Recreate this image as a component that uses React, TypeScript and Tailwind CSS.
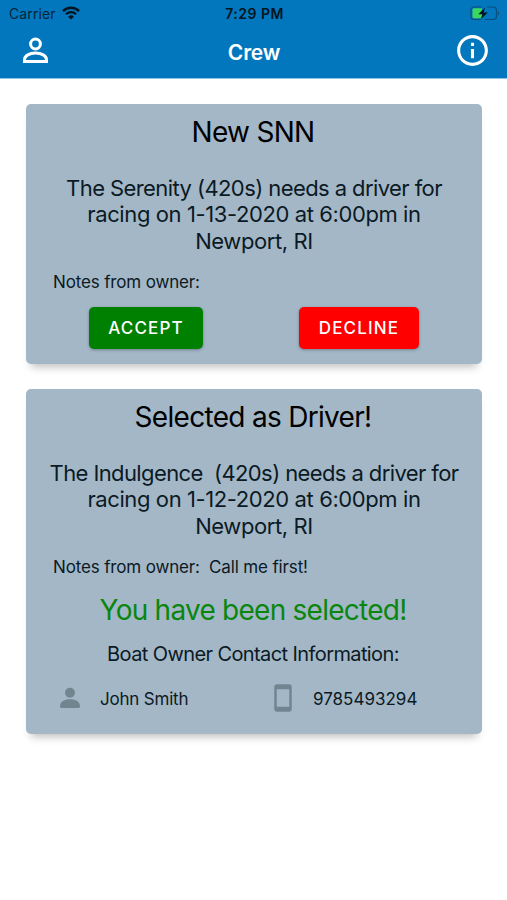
import type { ReactNode } from 'react';
import { MdInfoOutline, MdStayCurrentPortrait } from 'react-icons/md';

const StatusBar = () => {
  return (
    <div className="flex h-[27px] items-center text-[14px] leading-[17px] text-[#06243a]">
      <div className="flex flex-1 items-center gap-[6px] pl-[9px]">
        <span className="tracking-[0.1px]">Carrier</span>
        <svg className="mt-[-1px] h-[14px] w-[18px]" viewBox="0 0 18 14" fill="none">
          <path d="M1 5.1a11.4 11.4 0 0 1 16 0" stroke="#041420" strokeWidth="2.5" />
          <path d="M4 8.2a7.1 7.1 0 0 1 10 0" stroke="#041420" strokeWidth="2.3" />
          <path d="M9 13.6 6.1 10.7a4.1 4.1 0 0 1 5.8 0z" fill="#041420" />
        </svg>
      </div>
      <span className="font-semibold tracking-[0.5px] text-[#041420]">7:29 PM</span>
      <div className="flex flex-1 justify-end pr-[7px]">
        <svg className="mt-[-1px] h-[15px] w-[30px]" viewBox="0 0 30 15" fill="none">
          <path
            d="M12 1H4a3 3 0 0 0-3 3v6.500a3 3 0 0 0 3 3h6.500M17 1h6.500a3 3 0 0 1 3 3v6.500a3 3 0 0 1-3 3H15"
            stroke="#0a4c7c"
            strokeWidth="1.2"
          />
          <path d="M28 5.300c1.400.6 1.400 3.400 0 4z" fill="#0a4c7c" />
          <path d="M4 2.300h8v9.900H4A1.500 1.500 0 0 1 2.500 10.700V3.800A1.500 1.500 0 0 1 4 2.300z" fill="#3bd65f" />
          <path d="M15 1.600 8.300 8.200h4l-1.500 5 6.900-6.700h-4.100z" fill="#041420" />
        </svg>
      </div>
    </div>
  );
};

const PersonOutlineIcon = () => {
  return (
    <svg className="h-[37px] w-[37px]" viewBox="0 0 37 37" fill="none" stroke="currentColor" strokeWidth="3">
      <circle cx="18.500" cy="12" r="4.900" />
      <path d="M7.500 29.500v-1.800c0-4 5-6.700 11-6.700s11 2.700 11 6.700v1.800z" />
    </svg>
  );
};

const PersonIcon = () => {
  return (
    <svg className="h-[30px] w-[30px]" viewBox="0 0 30 30" fill="#718591">
      <circle cx="15" cy="9.700" r="5" />
      <path d="M5 22.800c0-4 4.300-6.600 10-6.600s10 2.600 10 6.600v.7c0 .8-.6 1.400-1.400 1.400H6.400c-.8 0-1.400-.6-1.400-1.400z" />
    </svg>
  );
};

const Header = () => {
  return (
    <header className="h-[79px] border-b border-[#8fc3e3] bg-[#0277bd]">
      <StatusBar />
      <div className="flex h-[47px] items-center justify-between pl-[17px] pr-[16px] text-white">
        <PersonOutlineIcon />
        <h1 className="mt-[4px] text-[21px] font-semibold tracking-[-0.2px]">Crew</h1>
        <MdInfoOutline size={37} />
      </div>
    </header>
  );
};

type CardProps = {
  title: string;
  height: string;
  lines: ReactNode;
  notes?: string;
  children: ReactNode;
};

const Card = ({ title, height, lines, notes, children }: CardProps) => {
  return (
    <section
      className={`flex flex-col rounded-[5px] bg-[#a3b7c7] text-[#0b1a24] shadow-[0_8px_8px_-5px_rgba(0,0,0,0.25)] ${height}`}
    >
      <h2 className="mt-[11px] pr-[2px] text-center text-[28px] leading-[34px] tracking-[-0.7px] text-black">
        {title}
      </h2>
      <div className="mt-[26px] text-center text-[22px] leading-[26.4px] tracking-[-0.4px]">
        {lines}
      </div>
      <p className="mt-[18px] whitespace-pre pl-[27px] text-[17px] leading-[20px] tracking-[-0.15px]">
        Notes from owner:{notes ? `  ${notes}` : ''}
      </p>
      {children}
    </section>
  );
};

export default function App() {
  return (
    <div className="min-h-[900px] bg-white font-['Inter',sans-serif]">
      <Header />
      <main className="flex flex-col gap-[25px] pl-[26px] pr-[25px] pt-[25px]">
        <Card
          title="New SNN"
          height="h-[260px]"
          lines={
            <>
              <p className="tracking-[-0.58px]">The Serenity (420s) needs a driver for</p>
              <p>racing on 1-13-2020 at 6:00pm in</p>
              <p>Newport, RI</p>
            </>
          }
        >
          <div className="mt-[15px] flex gap-[96px] pl-[63px] text-[17px] font-medium text-white">
            <button className="h-[42px] w-[114px] rounded-[5px] bg-[#008000] pt-[2px] tracking-[1.15px] shadow-[0_1px_3px_rgba(0,0,0,0.3)]">
              ACCEPT
            </button>
            <button className="h-[42px] w-[120px] rounded-[5px] bg-[#ff0000] pt-[2px] tracking-[1.15px] shadow-[0_1px_3px_rgba(0,0,0,0.3)]">
              DECLINE
            </button>
          </div>
        </Card>
        <Card
          title="Selected as Driver!"
          height="h-[345px]"
          notes="Call me first!"
          lines={
            <>
              <p className="whitespace-pre tracking-[-0.6px]">
                {'The Indulgence  (420s) needs a driver for'}
              </p>
              <p>racing on 1-12-2020 at 6:00pm in</p>
              <p>Newport, RI</p>
            </>
          }
        >
          <p className="mt-[16px] pr-[2px] text-center text-[28px] leading-[34px] tracking-[-0.75px] text-[#0a860f]">
            You have been selected!
          </p>
          <p className="mt-[15px] pr-[2px] text-center text-[20px] leading-[24px] tracking-[-0.6px]">
            Boat Owner Contact Information:
          </p>
          <div className="mt-[17px] grid grid-cols-[213px_1fr] pl-[29px] text-[17px]">
            <div className="flex items-center gap-[15px]">
              <PersonIcon />
              <span className="mt-[3px] tracking-[-0.2px]">John Smith</span>
            </div>
            <div className="flex items-center gap-[15px]">
              <MdStayCurrentPortrait size={30} color="#718591" />
              <span className="mt-[3px]">9785493294</span>
            </div>
          </div>
        </Card>
      </main>
    </div>
  );
}
